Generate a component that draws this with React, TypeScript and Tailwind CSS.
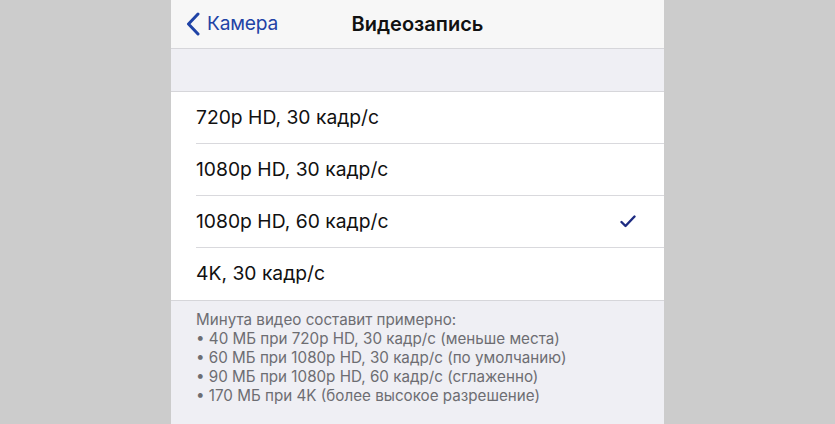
const options = [
  { label: "720p HD, 30 кадр/с", checked: false },
  { label: "1080p HD, 30 кадр/с", checked: false },
  { label: "1080p HD, 60 кадр/с", checked: true },
  { label: "4K, 30 кадр/с", checked: false },
];

const notes = [
  "Минута видео составит примерно:",
  "• 40 МБ при 720p HD, 30 кадр/с (меньше места)",
  "• 60 МБ при 1080p HD, 30 кадр/с (по умолчанию)",
  "• 90 МБ при 1080p HD, 60 кадр/с (сглаженно)",
  "• 170 МБ при 4K (более высокое разрешение)",
];

function Check() {
  return (
    <svg width="16" height="13" viewBox="0 0 16 13" fill="none">
      <path d="M1.5 7 L5.5 11 L14.5 1.5" stroke="#1d2b82" strokeWidth="2.4" strokeLinecap="round" strokeLinejoin="round" />
    </svg>
  );
}

export default function App() {
  return (
    <div className="flex h-[424px] w-[835px] justify-center overflow-hidden bg-[#cccccc] font-['Inter',sans-serif]">
      <div className="flex w-[493px] flex-col bg-[#efeff4]">
        {/* Nav bar */}
        <div className="relative flex h-[49px] shrink-0 items-center justify-center border-b border-[#d6d6da] bg-[#f7f7f7]">
          <div className="absolute left-[15px] top-0 flex h-full items-center gap-[7px] text-[#1f43a6]">
            <svg width="14" height="24" viewBox="0 0 14 24" fill="none">
              <path d="M12 2 L2.5 12 L12 22" stroke="#1f43a6" strokeWidth="3" strokeLinecap="round" strokeLinejoin="round" />
            </svg>
            <span className="text-[19.2px] leading-none tracking-[-0.2px]">Камера</span>
          </div>
          <span className="text-[20px] font-semibold leading-none text-[#111]">Видеозапись</span>
        </div>

        <div className="h-[42px] shrink-0" />

        {/* Options */}
        <div className="border-y border-[#d6d6da] bg-white">
          {options.map((o, i) => (
            <div key={o.label} className="pl-[25px]">
              <div
                className={`flex h-[52px] items-center justify-between pr-[28px] ${
                  i < options.length - 1 ? "border-b border-[#d9d9dd]" : ""
                }`}
              >
                <span className="text-[19.3px] leading-none text-[#111]">{o.label}</span>
                {o.checked && <Check />}
              </div>
            </div>
          ))}
        </div>

        {/* Footer */}
        <div className="pl-[25px] pt-[9px] text-[15.2px] leading-[19px] text-[#6d6d72]">
          {notes.map((n) => (
            <div key={n}>{n}</div>
          ))}
        </div>
      </div>
    </div>
  );
}
